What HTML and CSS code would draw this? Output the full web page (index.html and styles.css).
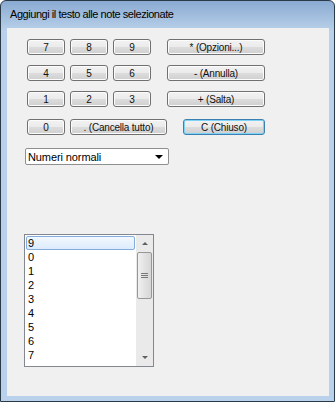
FILE: index.html
```html
<!DOCTYPE html>
<html lang="it">
<head>
    <meta charset="UTF-8">
    <title>Aggiungi il testo alle note selezionate</title>
    <link rel="stylesheet" href="styles.css">
</head>
<body>
    <!-- finestra di dialogo -->
    <div class="window">
        <div class="titlebar">Aggiungi il testo alle note selezionate</div>

        <div class="client">
            <!-- tastierino -->
            <div class="keypad">
                <div class="key-row">
                    <button class="btn num">7</button>
                    <button class="btn num">8</button>
                    <button class="btn num">9</button>
                    <button class="btn wide">* (Opzioni...)</button>
                </div>
                <div class="key-row">
                    <button class="btn num">4</button>
                    <button class="btn num">5</button>
                    <button class="btn num">6</button>
                    <button class="btn wide">- (Annulla)</button>
                </div>
                <div class="key-row">
                    <button class="btn num">1</button>
                    <button class="btn num">2</button>
                    <button class="btn num">3</button>
                    <button class="btn wide">+ (Salta)</button>
                </div>
                <div class="key-row last">
                    <button class="btn num">0</button>
                    <button class="btn clear">. (Cancella tutto)</button>
                    <button class="btn close default">C (Chiuso)</button>
                </div>
            </div>

            <!-- tipo di numeri -->
            <div class="combo">
                <span>Numeri normali</span>
                <span class="combo-arrow"></span>
            </div>

            <!-- elenco -->
            <div class="listbox">
                <ul class="items">
                    <li class="selected">9</li>
                    <li>0</li>
                    <li>1</li>
                    <li>2</li>
                    <li>3</li>
                    <li>4</li>
                    <li>5</li>
                    <li>6</li>
                    <li>7</li>
                </ul>
                <div class="scrollbar">
                    <div class="arrow up"></div>
                    <div class="track">
                        <div class="thumb"><span class="grip"></span></div>
                    </div>
                    <div class="arrow down"></div>
                </div>
            </div>
        </div>
    </div>
</body>
</html>
```

FILE: styles.css
```css
body {
    margin: 0;
    background: #ffffff;
    font-family: "Liberation Sans", Arial, sans-serif;
    font-size: 11px;
    color: #000;
}

/* cornice della finestra */
.window {
    width: 335px;
    height: 402px;
    box-sizing: border-box;
    border: 1px solid #2a3a48;
    border-radius: 6px 6px 0 0;
    background: linear-gradient(#8aaad2, #b9d1ea 30px, #b9d1ea);
    padding: 0 5px 5px 6px;
    display: flex;
    flex-direction: column;
}

.titlebar {
    height: 27px;
    padding-left: 3px;
    line-height: 26px;
    font-size: 11px;
    letter-spacing: -0.45px;
}

.client {
    flex: 1;
    background: #f0f0f0;
    padding: 11px 0 0 20px;
}

/* tastierino */
.keypad {
    display: flex;
    flex-direction: column;
    gap: 10px;
}

.key-row {
    display: flex;
    gap: 5px;
}

.key-row.last {
    margin-top: 2px;
}

.btn {
    height: 16px;
    box-sizing: border-box;
    padding: 0;
    border: 1px solid #707070;
    border-radius: 3px;
    background: linear-gradient(#f2f2f2, #ebebeb 50%, #dddddd 50%, #cfcfcf);
    box-shadow: inset 0 0 0 1px #fcfcfc;
    font-family: inherit;
    font-size: 10px;
    letter-spacing: -0.2px;
    line-height: 13px;
    color: #111;
}

.num {
    width: 38px;
}

.wide {
    width: 98px;
    margin-left: 11px;
}

.clear {
    width: 97px;
}

.close {
    width: 82px;
    margin-left: 11px;
}

.default {
    border-color: #3c7fb1;
    box-shadow: inset 0 0 0 1px #7dd3f5;
}

/* combo */
.combo {
    margin: 13px 0 0 -2px;
    width: 144px;
    height: 17px;
    box-sizing: border-box;
    border: 1px solid #8e8f8f;
    border-radius: 2px;
    background: #fff;
    display: flex;
    align-items: center;
    justify-content: space-between;
    padding: 0 5px 0 2px;
    font-size: 11px;
    letter-spacing: -0.1px;
}

.combo-arrow {
    width: 0;
    height: 0;
    border-left: 4px solid transparent;
    border-right: 4px solid transparent;
    border-top: 4px solid #000;
}

/* elenco */
.listbox {
    margin: 69px 0 0 -3px;
    width: 130px;
    height: 133px;
    box-sizing: border-box;
    border: 1px solid #828790;
    background: #fff;
    display: flex;
}

.items {
    list-style: none;
    margin: 0;
    padding: 1px 1px 0 1px;
    flex: 1;
}

.items li {
    height: 14px;
    line-height: 14px;
    padding-left: 2px;
    font-size: 11px;
    box-sizing: border-box;
}

.items li.selected {
    border: 1px solid #84acdd;
    border-radius: 2px;
    background: linear-gradient(#f2f8fd, #dcebfc);
    line-height: 12px;
    padding-left: 1px;
}

.scrollbar {
    width: 17px;
    background: #eaeaea;
    display: flex;
    flex-direction: column;
}

.arrow {
    height: 17px;
    display: flex;
    align-items: center;
    justify-content: center;
}

.arrow::before {
    content: "";
    border-left: 3px solid transparent;
    border-right: 3px solid transparent;
}

.arrow.up::before {
    border-bottom: 3px solid #606060;
}

.arrow.down::before {
    border-top: 3px solid #606060;
}

.track {
    flex: 1;
}

.thumb {
    margin: 0 1px;
    height: 47px;
    box-sizing: border-box;
    border: 1px solid #979797;
    border-radius: 2px;
    background: linear-gradient(90deg, #f1f1f1, #e2e2e2 50%, #d6d6d6);
    display: flex;
    align-items: center;
    justify-content: center;
}

.grip {
    width: 7px;
    height: 5px;
    background: repeating-linear-gradient(#777 0 1px, transparent 1px 2px);
}
```
